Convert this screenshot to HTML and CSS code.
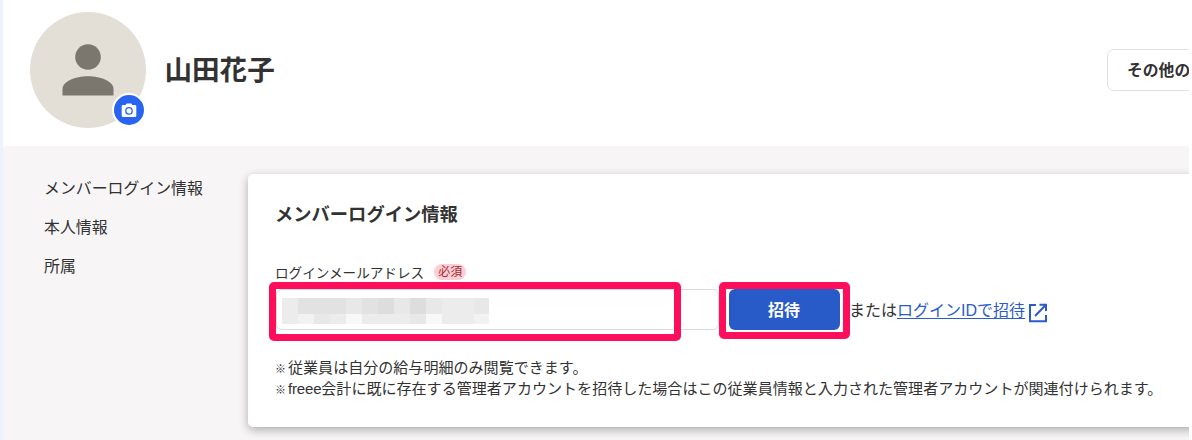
FILE: index.html
```html
<!DOCTYPE html>
<html lang="ja">
<head>
    <meta charset="UTF-8">
    <meta name="viewport" content="width=device-width, initial-scale=1.0">
    <title>メンバーログイン情報</title>
    <link rel="stylesheet" href="styles.css">
</head>
<body>
<div class="page">
    <header class="profile-header">
        <div class="avatar">
            <svg class="avatar-icon" width="52" height="52" viewBox="0 0 52 52">
                <circle cx="26" cy="13" r="12.8"/>
                <path d="M0.5 51.5V45C0.5 37.5 13 32.3 26 32.3S51.5 37.5 51.5 45V51.5Z"/>
            </svg>
            <button class="avatar-edit">
                <svg width="16" height="15" viewBox="0 0 16 15">
                    <path fill="#fff" d="M2 2H4.6L5.8 .5H10.2L11.4 2H14Q15.3 2 15.3 3.3V12.7Q15.3 14 14 14H2Q.7 14 .7 12.7V3.3Q.7 2 2 2Z"/>
                    <circle cx="8" cy="7.9" r="3.2" fill="#fff" stroke="#2864f0" stroke-width="1.3"/>
                </svg>
            </button>
        </div>
        <h1>山田花子</h1>
        <button class="other-button">その他の</button>
    </header>
    <div class="content">
        <nav class="side-nav">
            <a>メンバーログイン情報</a>
            <a>本人情報</a>
            <a>所属</a>
        </nav>
        <main class="card">
            <h2>メンバーログイン情報</h2>
            <div class="field-label">
                <label>ログインメールアドレス</label>
                <span class="required">必須</span>
            </div>
            <div class="login-row">
                <div class="mail-input">
                    <div class="mosaic">
                        <i class="c2"></i><i class="c4"></i><i class="c4"></i><i class="c4"></i><i class="c3"></i><i class="c4"></i><i class="c5"></i><i class="c3"></i><i class="c5"></i><i class="c3"></i><i class="c2"></i><i class="c2"></i><i class="c3"></i>
                        <i class="c2"></i><i class="c1"></i><i class="c3"></i><i class="c2"></i><i class="c0"></i><i class="c2"></i><i class="c2"></i><i class="c2"></i><i class="c3"></i><i class="c0"></i><i class="c2"></i><i class="c2"></i><i class="c1"></i>
                    </div>
                    <div class="highlight highlight-input"></div>
                </div>
                <div class="invite">
                    <button class="invite-button">招待</button>
                    <div class="highlight highlight-button"></div>
                </div>
                <span class="or">または</span>
                <a class="id-link">ログインIDで招待</a>
                <svg class="external" width="20" height="20" viewBox="0 0 20 20" fill="none" stroke="#2b5cc9" stroke-width="2">
                    <path d="M8 2H2V18.3H18V12M11.5 1.8H18V8M18 1.8L7 13"/>
                </svg>
            </div>
            <div class="notes">
                <p><span class="mark">※</span>従業員は自分の給与明細のみ閲覧できます。</p>
                <p><span class="mark">※</span><span class="latin">freee</span>会計に既に存在する管理者アカウントを招待した場合はこの従業員情報と入力された管理者アカウントが関連付けられます。</p>
            </div>
        </main>
    </div>
</div>
</body>
</html>
```
FILE: styles.css
```css
/* Global Styles */
* {
    box-sizing: border-box;
}

body {
    margin: 0;
    background-color: #fff;
    color: #323232;
    font-family: 'Liberation Sans', 'Noto Sans CJK JP', sans-serif;
    font-size: 16px;
    overflow: hidden;
}

h1, h2, p {
    margin: 0;
}

button {
    font-family: inherit;
    padding: 0;
}

.page {
    width: 1189px;
    height: 440px;
    border-left: 3px solid #ebf3ff;
    background-color: #f7f5f6;
    overflow: hidden;
}

/* Header */
.profile-header {
    display: flex;
    align-items: center;
    height: 146px;
    padding: 0 0 6px 27.4px;
    background-color: #fff;
}

.avatar {
    position: relative;
    display: flex;
    flex-shrink: 0;
    justify-content: center;
    width: 116px;
    height: 116px;
    padding-top: 32px;
    border-radius: 50%;
    background-color: #e3dfd7;
}

.avatar-icon {
    fill: #7b776f;
}

.avatar-edit {
    position: absolute;
    right: 0.5px;
    bottom: 1px;
    display: flex;
    align-items: center;
    justify-content: center;
    width: 34px;
    height: 34px;
    border: 2px solid #fff;
    border-radius: 50%;
    background-color: #2864f0;
}

h1 {
    margin-left: 18px;
    padding-top: 2px;
    font-size: 27.6px;
    line-height: 40px;
}

.other-button {
    flex-shrink: 0;
    width: 160px;
    height: 42px;
    margin: 0 -78px 0 auto;
    padding: 0 0 2px 19px;
    border: 1.5px solid #e1dfe0;
    border-radius: 7px;
    background-color: #fff;
    color: #323232;
    font-size: 15.8px;
    font-weight: bold;
    text-align: left;
}

/* Content */
.content {
    display: flex;
    align-items: flex-start;
    padding-top: 27.5px;
}

.side-nav {
    display: flex;
    flex-direction: column;
    flex-shrink: 0;
    gap: 15.2px;
    width: 245px;
    padding: 3px 0 0 41px;
    font-size: 15.9px;
    line-height: 24px;
}

.card {
    flex-shrink: 0;
    width: 970px;
    height: 253.5px;
    padding: 27px 0 0 28px;
    border-radius: 5px;
    background-color: #fff;
    box-shadow: 0 3px 10px rgba(0, 0, 0, 0.3);
}

h2 {
    margin-left: -1px;
    font-size: 18.3px;
    line-height: 28px;
}

.field-label {
    display: flex;
    align-items: center;
    gap: 10px;
    height: 20px;
    margin: 33px 0 0 -1px;
    font-size: 13.6px;
}

.required {
    height: 16px;
    padding: 0 4px;
    border-radius: 8px;
    background-color: #fbd0d4;
    color: #a8293c;
    font-size: 12px;
    line-height: 16px;
}

.login-row {
    display: flex;
    align-items: center;
    height: 42px;
    margin-top: 7px;
}

.mail-input {
    position: relative;
    width: 443px;
    height: 41px;
    padding: 8px 0 0 5px;
    border: 1px solid #dcdadb;
    border-radius: 6px;
}

.mosaic {
    display: grid;
    grid-template-columns: repeat(12, 16px) 15px;
    grid-template-rows: 16px 10px;
}

.c0 { background-color: #f8f8f8; }
.c1 { background-color: #f2f2f2; }
.c2 { background-color: #ececec; }
.c3 { background-color: #e8e8e8; }
.c4 { background-color: #e2e2e2; }
.c5 { background-color: #dddddd; }

.invite {
    position: relative;
    margin-left: 10px;
}

.invite-button {
    display: block;
    width: 111px;
    height: 41px;
    padding: 0 1px 2px 0;
    border: none;
    border-radius: 6px;
    background-color: #285ac8;
    color: #fff;
    font-size: 16px;
    font-weight: bold;
}

/* Pink frames over the input and the button */
.highlight {
    position: absolute;
    border: 7px solid #ff0f5b;
    border-radius: 5px;
}

.highlight-input {
    left: -8px;
    top: -8px;
    width: 412px;
    height: 59px;
}

.highlight-button {
    left: -10px;
    top: -7px;
    width: 131px;
    height: 57px;
}

.or {
    margin: -1px 0 0 9px;
    font-size: 16px;
}

.id-link {
    margin-top: -1px;
    color: #2b5cc9;
    text-decoration: underline;
    text-underline-offset: 2px;
}

.external {
    margin: 6px 0 0 3px;
}

.notes {
    margin: 26px 0 0 -1px;
    font-size: 15.05px;
    line-height: 21px;
    white-space: nowrap;
}

.notes p {
    height: 21px;
}

.mark {
    display: inline-block;
    width: 13px;
    font-size: 11px;
    font-weight: bold;
    line-height: 1;
}

.latin {
    letter-spacing: -0.2px;
}
```
